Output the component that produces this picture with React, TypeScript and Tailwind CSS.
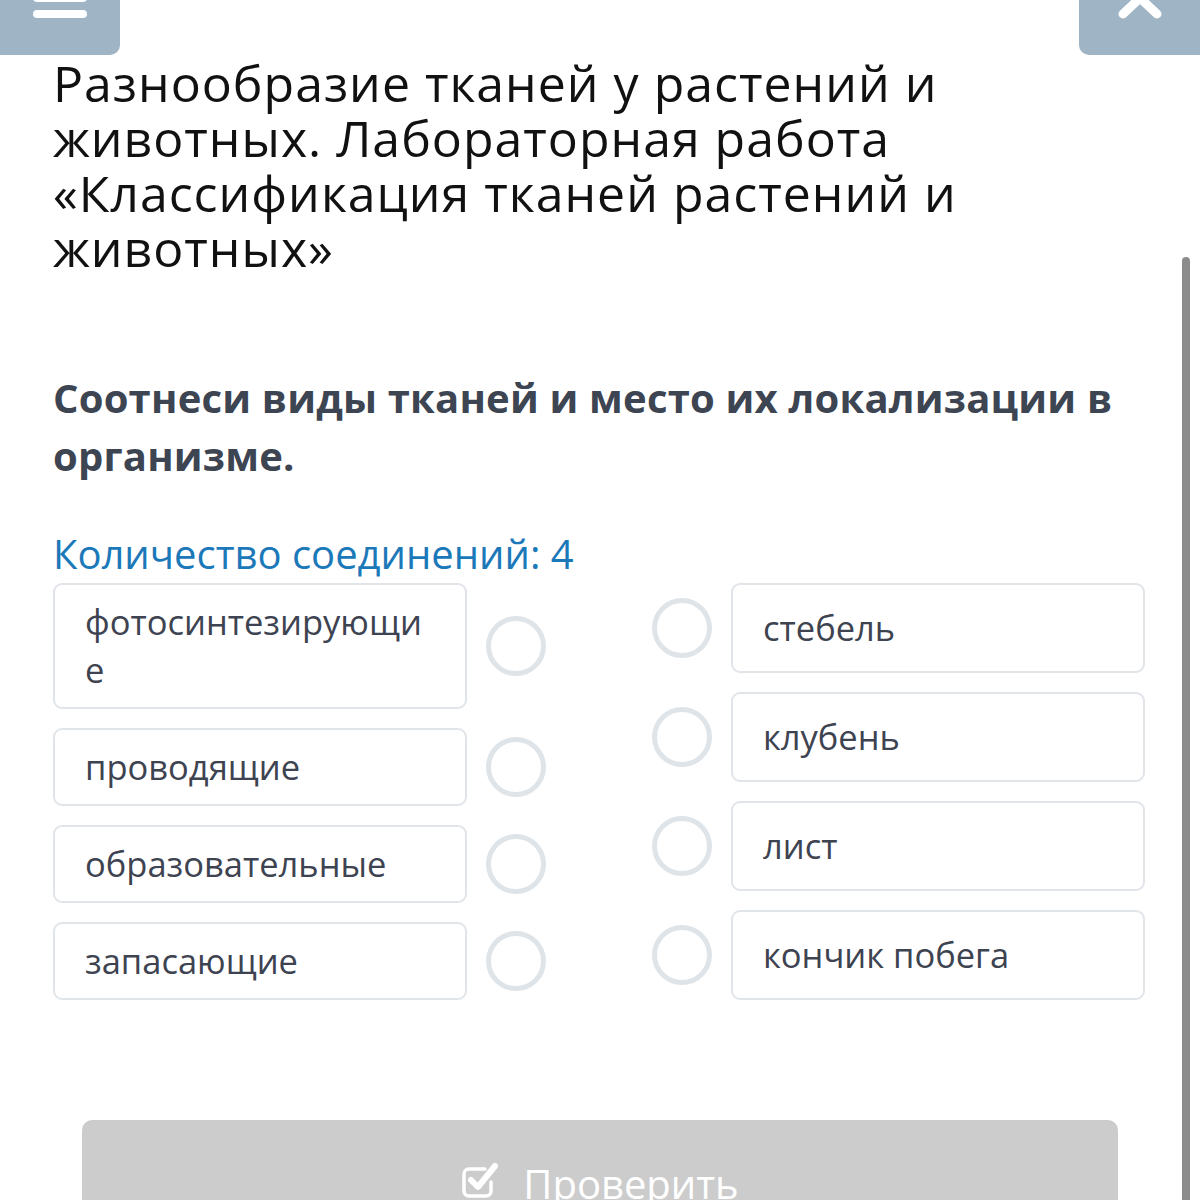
import React from 'react';

const leftItems = ['фотосинтезирующие', 'проводящие', 'образовательные', 'запасающие'];

const rightItems = ['стебель', 'клубень', 'лист', 'кончик побега'];

function Circle() {
  return <div className="h-[60px] w-[60px] shrink-0 rounded-full border-[5px] border-[#dfe4e9]" />;
}

function CheckSquareIcon() {
  return (
    <svg width="40" height="40" viewBox="0 0 40 40" fill="none">
      <path
        d="M30 22 V31 A5 5 0 0 1 25 36 H8 A5 5 0 0 1 3 31 V14 A5 5 0 0 1 8 9 H24"
        stroke="white"
        strokeWidth="3.5"
        strokeLinecap="round"
      />
      <path d="M10 20 L17 27 L34 6" stroke="white" strokeWidth="6" strokeLinecap="round" strokeLinejoin="round" />
    </svg>
  );
}

export default function App() {
  return (
    <div
      className="relative h-[1200px] w-[1200px] overflow-hidden bg-white"
      style={{ fontFamily: '"Open Sans", "Noto Sans", sans-serif' }}
    >
      {/* Top buttons */}
      <div className="flex justify-between">
        <div className="flex h-[55px] w-[120px] justify-center overflow-hidden rounded-br-[10px] bg-[#9fb4c4]">
          <div className="mt-[-6px] flex w-[54px] flex-col gap-[8px]">
            <div className="h-[8px] rounded-full bg-white" />
            <div className="h-[8px] rounded-full bg-white" />
          </div>
        </div>
        <div className="flex h-[55px] w-[121px] justify-center overflow-hidden rounded-bl-[10px] bg-[#9fb4c4]">
          <svg width="50" height="30" viewBox="0 0 50 30" className="mt-[-8px]">
            <polyline points="8,22 25,6 42,22" fill="none" stroke="white" strokeWidth="9" strokeLinecap="round" strokeLinejoin="round" />
          </svg>
        </div>
      </div>

      {/* Scrollbar */}
      <div className="absolute bottom-0 right-[10px] top-[257px] w-[8px] rounded-t-full bg-[#8c8c8c]" />

      <div className="w-[1145px] pl-[53px]">
        <h1 className="mt-px text-[50px] leading-[55px] font-normal tracking-[1px] text-[#111]">
          Разнообразие тканей у растений и животных. Лабораторная работа «Классификация тканей растений и животных»
        </h1>

        <p className="mt-[93px] text-[40px] leading-[58px] font-bold tracking-[0.2px] text-[#3d4452]">
          Соотнеси виды тканей и место их локализации в организме.
        </p>

        <div className="mt-[45px] text-[40px] leading-[48px] text-[#1b78b9]">Количество соединений: 4</div>

        <div className="mt-[5px] flex justify-between">
          <div className="flex w-[493px] flex-col gap-[19px]">
            {leftItems.map((text) => (
              <div key={text} className="flex items-center gap-[19px]">
                <div className="w-[414px] rounded-[9px] border-2 border-[#e1e5e9] py-[13px] pl-[30px] pr-[30px] text-[34.5px] leading-[48px] text-[#3d4350] break-all">
                  {text}
                </div>
                <Circle />
              </div>
            ))}
          </div>
          <div className="flex w-[493px] flex-col gap-[19px]">
            {rightItems.map((text) => (
              <div key={text} className="flex items-center gap-[19px]">
                <Circle />
                <div className="w-[414px] rounded-[9px] border-2 border-[#e1e5e9] py-[19px] pl-[30px] text-[34.5px] leading-[48px] text-[#3d4350]">
                  {text}
                </div>
              </div>
            ))}
          </div>
        </div>
      </div>

      {/* Check button */}
      <div className="mx-[82px] mt-[120px] flex h-[110px] items-start justify-center gap-[22px] rounded-[10px] bg-[#cccccc] pt-[40px]">
        <CheckSquareIcon />
        <span className="text-[40px] leading-[48px] text-white">Проверить</span>
      </div>
    </div>
  );
}
